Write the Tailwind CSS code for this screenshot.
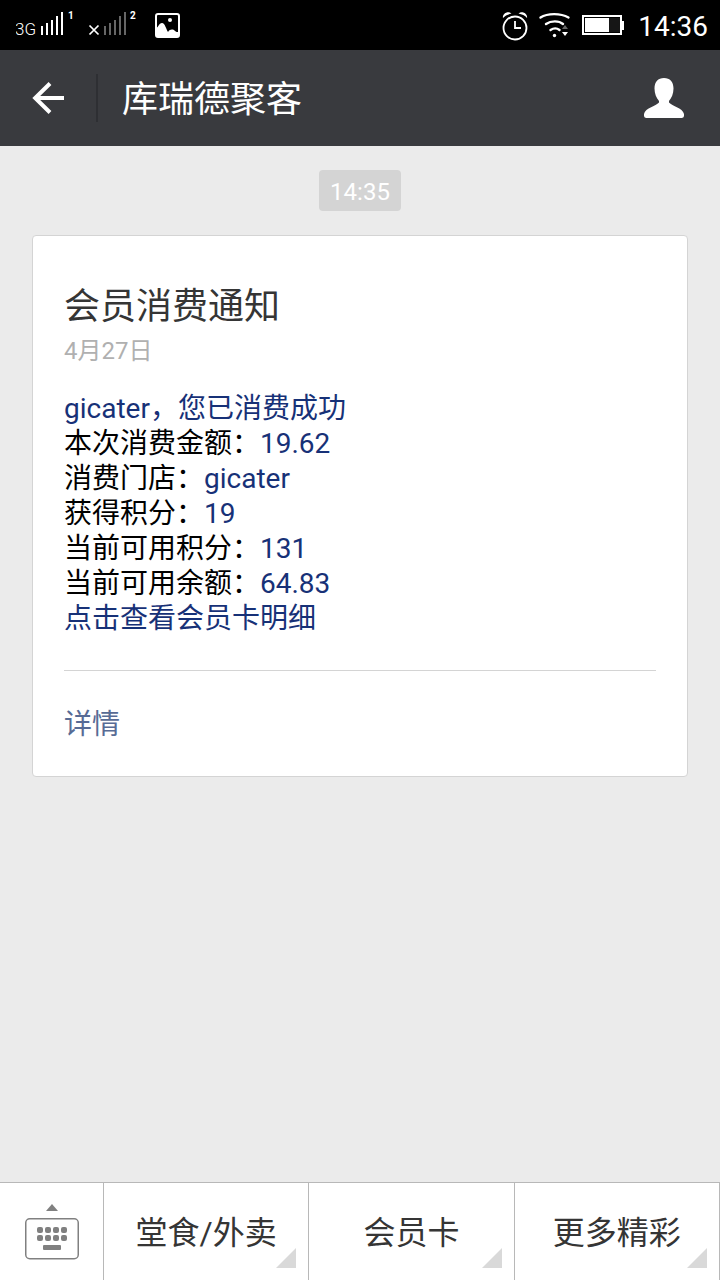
<!DOCTYPE html>
<html lang="zh-CN">
<head>
    <meta charset="UTF-8">
    <meta name="viewport" content="width=device-width, initial-scale=1.0">
    <title>库瑞德聚客</title>
    <script src="https://cdn.jsdelivr.net/npm/@tailwindcss/browser@4"></script>
</head>
<body class="bg-[#ebebeb] min-h-screen flex flex-col font-[Roboto,'Noto_Sans_CJK_SC',sans-serif]">
    <!-- Status bar -->
    <div class="bg-black text-white h-[50px] flex items-center justify-between pl-4 pr-3">
        <svg class="w-[168px] h-[50px]" viewBox="16 0 168 50" fill="none" stroke="#fff">
            <!-- SIM 1 -->
            <text x="15" y="35" class="text-[17px] font-light" fill="#fff" stroke="none">3G</text>
            <path stroke-width="2" d="M42 35v-9M47 35V23M52 35V20M57 35V16M62 35V12"/>
            <text x="68" y="19" class="text-[10px] font-bold" fill="#fff" stroke="none">1</text>
            <!-- SIM 2 -->
            <path stroke-width="1.700" d="M89.500 25.500l9 9M98.500 25.500l-9 9"/>
            <path stroke="#666" stroke-width="2" d="M105 35v-9M110 35V23M115 35V20M120 35V16M125 35V12"/>
            <text x="130" y="19" class="text-[10px] font-bold" fill="#fff" stroke="none">2</text>
            <!-- Picture notification -->
            <rect x="156" y="14" width="23" height="23" rx="2" stroke-width="2"/>
            <circle cx="170" cy="20" r="2" fill="#fff" stroke="none"/>
            <path fill="#fff" stroke="none" d="M156 28c2 0 3-5 6-5s4 6 6 9c2-3 5-3 7-1 1 1 2 1 4 1v5h-23z"/>
        </svg>
        <div class="flex items-center gap-3">
            <svg class="w-[124px] h-[50px]" viewBox="502 0 124 50" fill="none" stroke="#fff">
                <!-- Alarm -->
                <circle cx="515" cy="28" r="11.500" stroke-width="1.800"/>
                <path stroke-width="1.800" d="M515 21v7h6"/>
                <path fill="#fff" stroke="none" d="M503 18c-1-4 4.500-8 8.500-4.500-3.500.8-6.500 2-8.500 4.500zM527 18c1-4-4.500-8-8.500-4.500 3.500.8 6.500 2 8.500 4.500z"/>
                <!-- Wi-Fi -->
                <path stroke-width="2.400" stroke-linecap="round" d="M540.500 17.500c7-4.500 20-4.500 28 0M546 24c5-3.500 13-3.500 17 0M550.500 30c3-2 6.500-2 9 0"/>
                <circle cx="554.500" cy="35.500" r="1.700" fill="#fff" stroke="none"/>
                <path fill="#666" stroke="none" d="M562 29l3-4 3 4z"/>
                <path fill="#fff" stroke="none" d="M562 32h6l-3 4z"/>
                <!-- Battery -->
                <rect x="583" y="16" width="38" height="18" stroke-width="2"/>
                <rect x="585" y="18" width="24" height="14" fill="#fff" stroke="none"/>
                <rect x="609" y="18" width="11" height="14" fill="#161616" stroke="none"/>
                <rect x="621" y="21" width="3" height="9" fill="#fff" stroke="none"/>
            </svg>
            <span class="text-[28px] leading-[50px] pt-1">14:36</span>
        </div>
    </div>

    <!-- Header -->
    <header class="bg-[#393a3e] text-white h-24 flex items-center">
        <button type="button" aria-label="返回" class="w-24 h-24 flex items-center justify-center">
            <svg class="w-8 h-8" viewBox="0 0 32 32" fill="none" stroke="#fff" stroke-width="4">
                <path d="M32 16H3M18 1.500L3.200 16 18 30.500"/>
            </svg>
        </button>
        <div class="w-[2px] h-12 bg-[#2e2f33]"></div>
        <h1 class="flex-1 pl-6 pt-1 text-[36px] leading-[48px]">库瑞德聚客</h1>
        <button type="button" aria-label="资料" class="pr-9 h-24 flex items-center">
            <svg class="w-10 h-10" viewBox="0 0 40 40" fill="#fff">
                <path d="M20 0c6 0 9.500 4 9.500 10.500 0 5.500-2 9.500-4.500 12.500v1.500c2 3 14 5.500 15 11.500.3 2.500-.5 4-2.500 4h-35C.5 40-.3 38.500 0 36c1-6 13-8.500 15-11.500V23c-2.500-3-4.500-7-4.500-12.500C10.500 4 14 0 20 0z"/>
            </svg>
        </button>
    </header>

    <!-- Messages -->
    <main class="flex-1 px-8 pt-6 flex flex-col items-center">
        <time class="bg-[#d4d4d4] text-white text-[24px] leading-[38px] rounded px-[11px] pt-[3px]">14:35</time>

        <section class="w-full mt-6 bg-white border border-[#d4d4d4] rounded-sm px-[31px]">
            <h2 class="pt-[47px] text-[36px] leading-[48px] text-[#353535]">会员消费通知</h2>
            <p class="text-[24px] leading-[40px] text-[#b0b0b0]">4月27日</p>
            <div class="mt-[20px] text-[28px] leading-[35px] text-black">
                <p class="text-[#173177]">gicater，您已消费成功</p>
                <p>本次消费金额：<span class="text-[#173177]">19.62</span></p>
                <p>消费门店：<span class="text-[#173177]">gicater</span></p>
                <p>获得积分：<span class="text-[#173177]">19</span></p>
                <p>当前可用积分：<span class="text-[#173177]">131</span></p>
                <p>当前可用余额：<span class="text-[#173177]">64.83</span></p>
                <p class="text-[#173177]">点击查看会员卡明细</p>
            </div>
            <a href="#" class="block mt-[34px] border-t border-[#d4d4d4] pt-[2px] text-[28px] leading-[103px] text-[#576b95]">详情</a>
        </section>
    </main>

    <!-- Bottom menu -->
    <nav class="bg-white border-t border-[#b8b8b8] h-[98px] flex text-[32px] text-[#353535]">
        <button type="button" aria-label="键盘" class="w-[103px] flex items-center justify-center">
            <svg class="w-[54px] h-[56px]" viewBox="0 0 54 56" fill="#808080">
                <path d="M21 7l6-7 6 7z"/>
                <rect x=".75" y="14.750" width="52.500" height="40" rx="4" fill="none" stroke="#808080" stroke-width="1.500"/>
                <g>
                    <rect x="12" y="23" width="6" height="6" rx="2"/>
                    <rect x="20" y="23" width="6" height="6" rx="2"/>
                    <rect x="28" y="23" width="6" height="6" rx="2"/>
                    <rect x="36" y="23" width="6" height="6" rx="2"/>
                    <rect x="12" y="31" width="6" height="6" rx="2"/>
                    <rect x="20" y="31" width="6" height="6" rx="2"/>
                    <rect x="28" y="31" width="6" height="6" rx="2"/>
                    <rect x="36" y="31" width="6" height="6" rx="2"/>
                </g>
                <rect x="18" y="41" width="18" height="5" rx="1"/>
            </svg>
        </button>
        <button type="button" class="relative flex-1 pt-[2px] border-l border-[#b8b8b8]">
            堂食/外卖
            <svg class="absolute right-3 bottom-3 w-5 h-5" viewBox="0 0 20 20" fill="#d9d9d9"><path d="M20 0v20H0z"/></svg>
        </button>
        <button type="button" class="relative flex-1 pt-[2px] border-l border-[#b8b8b8]">
            会员卡
            <svg class="absolute right-3 bottom-3 w-5 h-5" viewBox="0 0 20 20" fill="#d9d9d9"><path d="M20 0v20H0z"/></svg>
        </button>
        <button type="button" class="relative flex-1 pt-[2px] border-x border-[#b8b8b8]">
            更多精彩
            <svg class="absolute right-3 bottom-3 w-5 h-5" viewBox="0 0 20 20" fill="#d9d9d9"><path d="M20 0v20H0z"/></svg>
        </button>
    </nav>
</body>
</html>
